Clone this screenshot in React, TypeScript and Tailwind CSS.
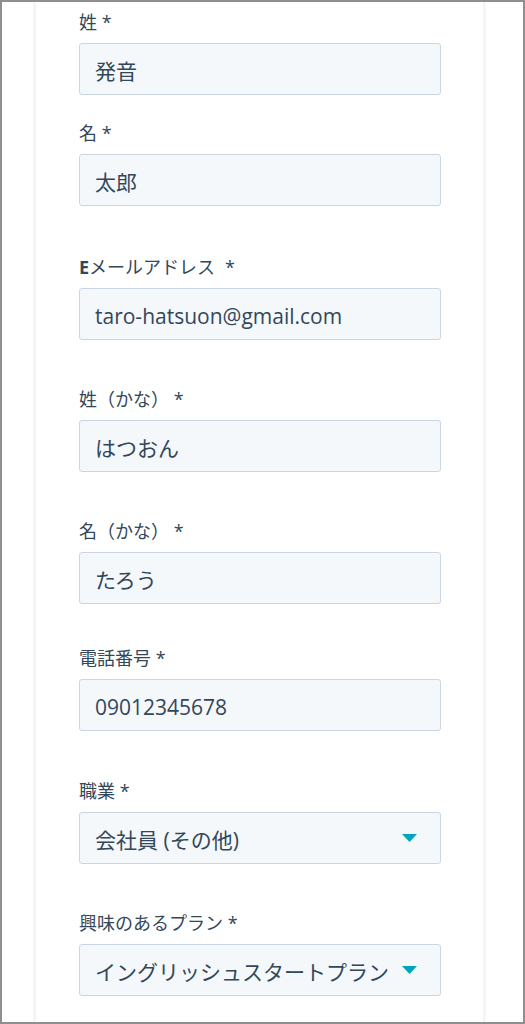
import React from "react";

const FONT = { fontFamily: "'Open Sans', 'Noto Sans CJK JP', sans-serif" };

type Field = {
  label: React.ReactNode;
  value: string;
  select?: boolean;
  mt: string;
};

const fields: Field[] = [
  { label: <>姓 *</>, value: "発音", mt: "mt-0" },
  { label: <>名 *</>, value: "太郎", mt: "mt-[26px]" },
  {
    label: (
      <>
        <span className="font-bold">E</span>メールアドレス<span className="ml-[10px]">*</span>
      </>
    ),
    value: "taro-hatsuon@gmail.com",
    mt: "mt-[49px]",
  },
  { label: <>姓（かな） *</>, value: "はつおん", mt: "mt-[47px]" },
  { label: <>名（かな） *</>, value: "たろう", mt: "mt-[47px]" },
  { label: <>電話番号 *</>, value: "09012345678", mt: "mt-[42px]" },
  { label: <>職業 *</>, value: "会社員 (その他)", select: true, mt: "mt-[48px]" },
  { label: <>興味のあるプラン *</>, value: "イングリッシュスタートプラン", select: true, mt: "mt-[47px]" },
];

export default function App() {
  return (
    <div
      className="w-[525px] h-[1024px] border-2 border-[#8f8f8f] bg-white overflow-hidden flex"
      style={FONT}
    >
      <div className="ml-[31px] w-[453px] h-full border-x-[3px] border-[#f4f5f8] bg-white pl-[43px] pt-[8px]">
        {fields.map((f, i) => (
          <div key={i} className={f.mt}>
            <div className="h-[24px] leading-[24px] text-[18px] text-[#33475b] whitespace-nowrap">
              {f.label}
            </div>
            <div className="mt-[9px] w-[362px] h-[52px] rounded-[3px] border border-[#cbd6e2] bg-[#f5f8fa] flex items-center pl-[15px] pr-[23px]">
              <span className="flex-1 text-[21px] leading-[28px] pt-[3px] text-[#33475b] whitespace-nowrap overflow-hidden">
                {f.value}
              </span>
              {f.select && (
                <svg width="15" height="8" viewBox="0 0 15 8" className="shrink-0 ml-[4px]">
                  <polygon points="0,0 15,0 7.5,8" fill="#00a4bd" />
                </svg>
              )}
            </div>
          </div>
        ))}
      </div>
    </div>
  );
}
